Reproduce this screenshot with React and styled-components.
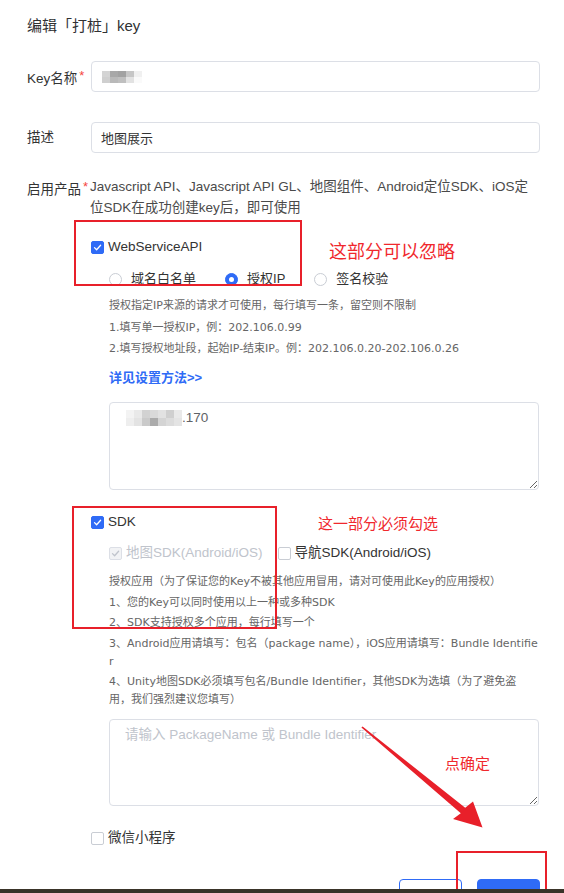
import React from "react";
import styled, { createGlobalStyle } from "styled-components";

const BLUE = "#2f6bf6";
const RED = "#e8202a";

const GlobalStyle = createGlobalStyle`
  html, body { margin: 0; padding: 0; background: #fff; }
  body { font-family: "Liberation Sans", "Noto Sans CJK SC", sans-serif; color: #333; }
  * { box-sizing: border-box; }
`;

const Page = styled.div`
  position: relative;
  width: 564px;
  height: 893px;
  overflow: hidden;
  padding: 16px 24px 0 27px;
  background: #fff;
`;

const Title = styled.h1`
  margin: 0;
  font-size: 15px;
  font-weight: 400;
  line-height: 20px;
  color: #303133;
`;

const FormRow = styled.div`
  display: grid;
  grid-template-columns: 63px 1fr;
  align-items: ${(p) => (p.$top ? "start" : "center")};
  margin-top: ${(p) => p.$mt}px;
`;

const Label = styled.div`
  font-size: 13.5px;
  line-height: 21px;
  color: #333;
  white-space: nowrap;
`;

const Star = styled.span`
  color: #f5453d;
  font-size: 13px;
  margin-left: 2px;
  vertical-align: 3px;
`;

const InputBox = styled.div`
  height: 31px;
  margin-left: 1px;
  border: 1px solid #dcdfe6;
  border-radius: 4px;
  display: flex;
  align-items: center;
  padding: 0 9px;
  font-size: 13px;
  color: #333;
`;

const Column = styled.div`
  display: flex;
  flex-direction: column;
  align-items: stretch;
`;

const Desc = styled.div`
  font-size: 13.5px;
  line-height: 21px;
  color: #4a4a4a;
`;

const CheckItem = styled.label`
  display: inline-flex;
  align-items: center;
  gap: 4px;
  font-size: ${(p) => p.$size || 13.5}px;
  line-height: 20px;
  color: ${(p) => (p.$disabled ? "#c0c4cc" : "#333")};
  margin-top: ${(p) => p.$mt || 0}px;
  margin-left: ${(p) => p.$ml || 0}px;
  white-space: nowrap;
`;

const Box = styled.span`
  width: 13px;
  height: 13px;
  flex: none;
  border-radius: 2px;
  display: inline-flex;
  align-items: center;
  justify-content: center;
  border: 1px solid
    ${(p) => (p.$checked ? (p.$disabled ? "#dcdfe6" : BLUE) : "#c9cdd4")};
  background: ${(p) => (p.$checked ? (p.$disabled ? "#f2f3f5" : BLUE) : "#fff")};
`;

const Row = styled.div`
  display: flex;
  align-items: center;
  gap: ${(p) => p.$gap || 0}px;
  margin-top: ${(p) => p.$mt || 0}px;
`;

const Sub = styled.div`
  display: flex;
  flex-direction: column;
  padding-left: 19px;
`;

const RadioItem = styled.label`
  display: inline-flex;
  align-items: center;
  gap: 9px;
  font-size: 13px;
  line-height: 20px;
  color: #333;
`;

const RadioCircle = styled.span`
  width: 13px;
  height: 13px;
  flex: none;
  border-radius: 50%;
  display: inline-flex;
  align-items: center;
  justify-content: center;
  border: 1px solid ${(p) => (p.$checked ? BLUE : "#c9cdd4")};
  background: ${(p) => (p.$checked ? BLUE : "#fff")};
  &::after {
    content: "";
    width: 5px;
    height: 5px;
    border-radius: 50%;
    background: #fff;
    display: ${(p) => (p.$checked ? "block" : "none")};
  }
`;

const Help = styled.div`
  margin-top: ${(p) => p.$mt}px;
  margin-right: -14px;
  font-family: "DejaVu Sans", "Noto Sans CJK SC", sans-serif;
  font-size: 11px;
  line-height: 18px;
  color: #666;
  & > p {
    margin: 0;
  }
  & > p + p {
    margin-top: ${(p) => p.$gap}px;
  }
`;

const Link = styled.a`
  display: block;
  margin-top: 10px;
  font-size: 13px;
  font-weight: 700;
  line-height: 20px;
  color: ${BLUE};
  text-decoration: none;
`;

const TextBox = styled.div`
  margin-top: ${(p) => p.$mt}px;
  height: ${(p) => p.$h}px;
  width: 430px;
  border: 1px solid #dcdfe6;
  border-radius: 4px;
  padding: 6px 15px;
  font-size: 13.5px;
  line-height: 18px;
  color: ${(p) => (p.$placeholder ? "#c0c4cc" : "#606266")};
  resize: vertical;
  overflow: auto;
  display: flex;
  align-items: flex-start;
`;

const ValueLine = styled.div`
  display: flex;
  align-items: center;
  padding-left: 1px;
`;

const Buttons = styled.div`
  display: flex;
  justify-content: flex-end;
  gap: 15px;
  margin-top: 31px;
`;

const Button = styled.button`
  width: 63px;
  height: 32px;
  border-radius: 4px;
  font-family: inherit;
  font-size: 13px;
  border: 1px solid ${BLUE};
  background: ${(p) => (p.$primary ? BLUE : "#fff")};
  color: ${(p) => (p.$primary ? "#fff" : BLUE)};
  padding: 0;
`;

const Taskbar = styled.div`
  position: absolute;
  left: 0;
  right: 0;
  bottom: 0;
  height: 4px;
  background: #3a3429;
`;

const Frame = styled.div`
  position: absolute;
  left: ${(p) => p.$x}px;
  top: ${(p) => p.$y}px;
  width: ${(p) => p.$w}px;
  height: ${(p) => p.$h}px;
  border: 2px solid ${RED};
  pointer-events: none;
`;

const Note = styled.div`
  position: absolute;
  left: ${(p) => p.$x}px;
  top: ${(p) => p.$y}px;
  font-family: "Noto Sans CJK SC", sans-serif;
  font-size: ${(p) => p.$size}px;
  line-height: 1;
  color: #f0282d;
  white-space: nowrap;
`;

const ArrowSvg = styled.svg`
  position: absolute;
  left: 0;
  top: 0;
  pointer-events: none;
`;

const Check = ({ color = "#fff" }) => (
  <svg width="9" height="9" viewBox="0 0 9 9">
    <polyline
      points="1.5,4.6 3.6,6.7 7.6,2.3"
      fill="none"
      stroke={color}
      strokeWidth="1.3"
      strokeLinecap="round"
      strokeLinejoin="round"
    />
  </svg>
);

const Checkbox = ({ checked, disabled, size, mt, ml, children }) => (
  <CheckItem $size={size} $disabled={disabled} $mt={mt} $ml={ml}>
    <Box $checked={checked} $disabled={disabled}>
      {checked && <Check color={disabled ? "#c0c4cc" : "#fff"} />}
    </Box>
    {children}
  </CheckItem>
);

const Radio = ({ checked, children }) => (
  <RadioItem>
    <RadioCircle $checked={checked} />
    {children}
  </RadioItem>
);

const Mosaic = ({ rows, cw, ch }) => (
  <svg width={rows[0].length * cw} height={rows.length * ch} style={{ display: "block" }}>
    {rows.map((r, i) =>
      r.map((c, j) => (
        <rect key={i + "-" + j} x={j * cw} y={i * ch} width={cw} height={ch} fill={c} />
      ))
    )}
  </svg>
);

const keyMosaic = [
  ["#d4d4d4", "#a8a8a8", "#a2a2a2", "#c6c6c6", "#f0f0f0"],
  ["#cfcfcf", "#b9b9b9", "#bfbfbf", "#e2e2e2", "#fafafa"],
];

const ipMosaic = [
  ["#f3f3f3", "#e9e9e9", "#d2d2d2", "#dadada", "#e2e2e2", "#cfcfcf", "#e9e9e9"],
  ["#eeeeee", "#e3e3e3", "#cacaca", "#ababab", "#d4d4d4", "#dcdcdc", "#e4e4e4"],
];

export default function App() {
  return (
    <>
      <GlobalStyle />
      <Page>
        <Title>编辑「打桩」key</Title>

        <FormRow $mt={25}>
          <Label>
            Key名称<Star>*</Star>
          </Label>
          <InputBox>
            <ValueLine>
              <Mosaic rows={keyMosaic} cw={8} ch={6} />
            </ValueLine>
          </InputBox>
        </FormRow>

        <FormRow $mt={30}>
          <Label>描述</Label>
          <InputBox>地图展示</InputBox>
        </FormRow>

        <FormRow $mt={23} $top>
          <Label>
            启用产品<Star>*</Star>
          </Label>
          <Column>
            <Desc>
              Javascript API、Javascript API GL、地图组件、Android定位SDK、iOS定位SDK在成功创建key后，即可使用
            </Desc>

            <Checkbox checked mt={19} ml={1}>
              WebServiceAPI
            </Checkbox>
            <Sub>
              <Row $gap={29} $mt={12}>
                <Radio>域名白名单</Radio>
                <Radio checked>授权IP</Radio>
                <Radio>签名校验</Radio>
              </Row>
              <Help $mt={8} $gap={3.5}>
                <p>授权指定IP来源的请求才可使用，每行填写一条，留空则不限制</p>
                <p>1.填写单一授权IP，例：202.106.0.99</p>
                <p>2.填写授权地址段，起始IP-结束IP。例：202.106.0.20-202.106.0.26</p>
              </Help>
              <Link>详见设置方法&gt;&gt;</Link>
              <TextBox $mt={14} $h={88}>
                <ValueLine>
                  <Mosaic rows={ipMosaic} cw={8} ch={8} />
                  .170
                </ValueLine>
              </TextBox>
            </Sub>

            <Checkbox checked mt={22} ml={1}>
              SDK
            </Checkbox>
            <Sub>
              <Row $gap={15} $mt={11}>
                <Checkbox checked disabled size={13.5}>
                  地图SDK(Android/iOS)
                </Checkbox>
                <Checkbox size={13.5}>导航SDK(Android/iOS)</Checkbox>
              </Row>
              <Help $mt={10} $gap={2.5}>
                <p>授权应用（为了保证您的Key不被其他应用冒用，请对可使用此Key的应用授权）</p>
                <p>1、您的Key可以同时使用以上一种或多种SDK</p>
                <p>2、SDK支持授权多个应用，每行填写一个</p>
                <p>
                  3、Android应用请填写：包名（package name），iOS应用请填写：Bundle Identifie
                  <br />r
                </p>
                <p>
                  4、Unity地图SDK必须填写包名/Bundle Identifier，其他SDK为选填（为了避免盗
                  <br />
                  用，我们强烈建议您填写）
                </p>
              </Help>
              <TextBox $mt={10} $h={87} $placeholder>
                请输入 PackageName 或 Bundle Identifier
              </TextBox>
            </Sub>

            <Checkbox mt={22} ml={1}>
              微信小程序
            </Checkbox>
          </Column>
        </FormRow>

        <Buttons>
          <Button>取消</Button>
          <Button $primary>确定</Button>
        </Buttons>

        <Frame $x={74} $y={220} $w={228} $h={66} />
        <Note $x={329} $y={241} $size={18}>
          这部分可以忽略
        </Note>
        <Frame $x={72} $y={506} $w={205} $h={123} />
        <Note $x={318} $y={515} $size={15}>
          这一部分必须勾选
        </Note>
        <Note $x={445} $y={755} $size={15}>
          点确定
        </Note>
        <ArrowSvg width="564" height="893" viewBox="0 0 564 893">
          <polygon
            points="361.4,727.6 362.6,726.4 465.2,807.8 473,801.5 482.5,827.5 453,819 460.8,813.2"
            fill="#e8202a"
          />
        </ArrowSvg>
        <Frame $x={456} $y={851} $w={91} $h={40} />
        <Taskbar />
      </Page>
    </>
  );
}
